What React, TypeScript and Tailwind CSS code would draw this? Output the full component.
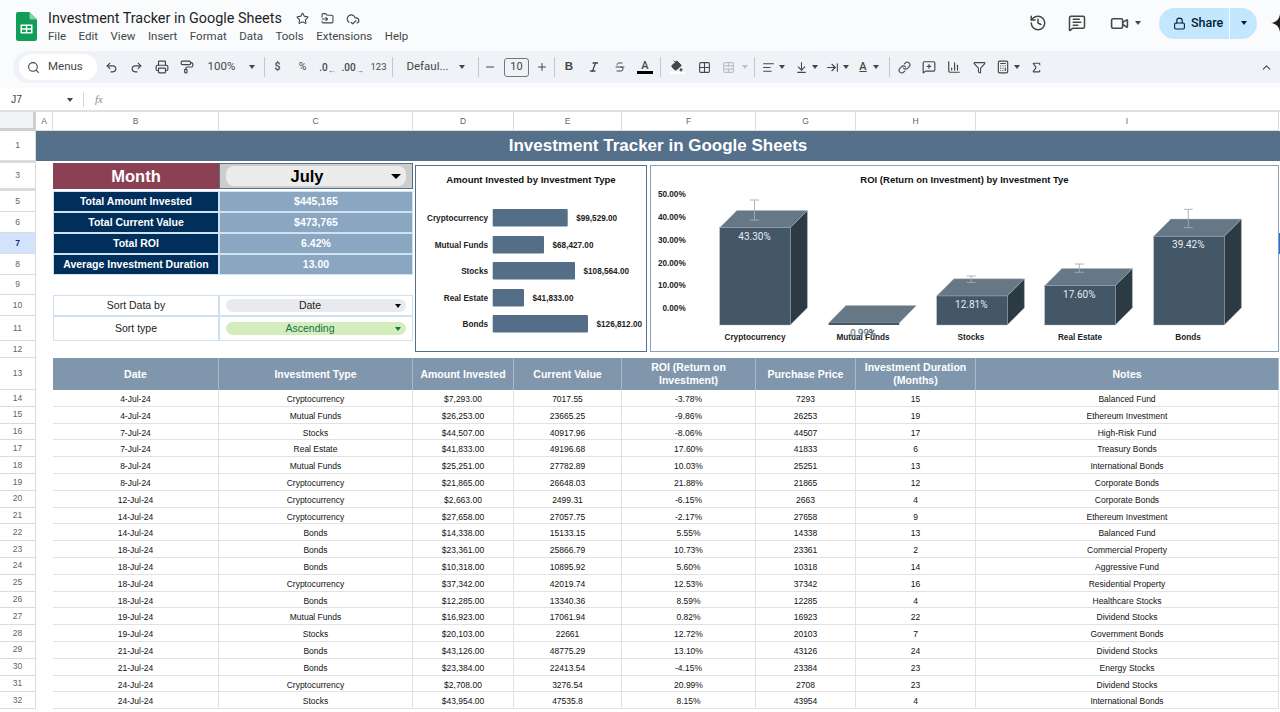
import React from "react";
import {
  Search, Undo2, Redo2, Printer, PaintRoller, Italic, Strikethrough, PaintBucket, Grid2x2, TableCellsMerge,
  AlignLeft, ArrowDownToLine, ChevronUp, Link, MessageSquarePlus, ChartColumn, Filter, Calculator, Sigma,
  History, MessageSquareText, Video, Lock, Star, FolderInput, CloudCheck, Minus, Plus, ArrowRightToLine,
} from "lucide-react";

const Caret = ({ className = "border-t-[#444746]" }: { className?: string }) => (
  <span className={`inline-block w-0 h-0 border-l-[3.5px] border-r-[3.5px] border-t-[4px] border-l-transparent border-r-transparent ${className}`} />
);

const Slot = ({ children, w = "w-[25px]" }: { children: React.ReactNode; w?: string }) => (
  <div className={`${w} h-full flex items-center justify-center shrink-0 text-[#444746]`}>{children}</div>
);
const Div = ({ className = "" }: { className?: string }) => <div className={`w-px h-[20px] bg-[#c7c7c7] shrink-0 ${className}`} />;

const rows = [
  ["4-Jul-24", "Cryptocurrency", "$7,293.00", "7017.55", "-3.78%", "7293", "15", "Balanced Fund"],
  ["4-Jul-24", "Mutual Funds", "$26,253.00", "23665.25", "-9.86%", "26253", "19", "Ethereum Investment"],
  ["7-Jul-24", "Stocks", "$44,507.00", "40917.96", "-8.06%", "44507", "17", "High-Risk Fund"],
  ["7-Jul-24", "Real Estate", "$41,833.00", "49196.68", "17.60%", "41833", "6", "Treasury Bonds"],
  ["8-Jul-24", "Mutual Funds", "$25,251.00", "27782.89", "10.03%", "25251", "13", "International Bonds"],
  ["8-Jul-24", "Cryptocurrency", "$21,865.00", "26648.03", "21.88%", "21865", "12", "Corporate Bonds"],
  ["12-Jul-24", "Cryptocurrency", "$2,663.00", "2499.31", "-6.15%", "2663", "4", "Corporate Bonds"],
  ["14-Jul-24", "Cryptocurrency", "$27,658.00", "27057.75", "-2.17%", "27658", "9", "Ethereum Investment"],
  ["14-Jul-24", "Bonds", "$14,338.00", "15133.15", "5.55%", "14338", "13", "Balanced Fund"],
  ["18-Jul-24", "Bonds", "$23,361.00", "25866.79", "10.73%", "23361", "2", "Commercial Property"],
  ["18-Jul-24", "Bonds", "$10,318.00", "10895.92", "5.60%", "10318", "14", "Aggressive Fund"],
  ["18-Jul-24", "Cryptocurrency", "$37,342.00", "42019.74", "12.53%", "37342", "16", "Residential Property"],
  ["18-Jul-24", "Bonds", "$12,285.00", "13340.36", "8.59%", "12285", "4", "Healthcare Stocks"],
  ["19-Jul-24", "Mutual Funds", "$16,923.00", "17061.94", "0.82%", "16923", "22", "Dividend Stocks"],
  ["19-Jul-24", "Stocks", "$20,103.00", "22661", "12.72%", "20103", "7", "Government Bonds"],
  ["21-Jul-24", "Bonds", "$43,126.00", "48775.29", "13.10%", "43126", "24", "Dividend Stocks"],
  ["21-Jul-24", "Bonds", "$23,384.00", "22413.54", "-4.15%", "23384", "23", "Energy Stocks"],
  ["24-Jul-24", "Cryptocurrency", "$2,708.00", "3276.54", "20.99%", "2708", "23", "Dividend Stocks"],
  ["24-Jul-24", "Stocks", "$43,954.00", "47535.8", "8.15%", "43954", "4", "International Bonds"],
];

const RowHead = ({ n, active }: { n: number | string; active?: boolean }) => (
  <div className={`flex items-center justify-center border-b border-r border-[#dcdcdc] text-[8.5px] overflow-hidden ${active ? "bg-[#d3e3fd] text-[#0b2f6b] font-bold" : "bg-white text-[#5f6368]"}`}>
    {n}
  </div>
);

const Summary = ({ label, value }: { label: string; value: string }) => (
  <>
    <div className="bg-[#002f5c] border border-[#cfe2f3] text-white font-bold text-[10.5px] flex items-center justify-center">{label}</div>
    <div className="bg-[#8aa6c0] border border-[#cfe2f3] text-white font-bold text-[10.5px] flex items-center justify-center">{value}</div>
  </>
);

const heads = ["Date", "Investment Type", "Amount Invested", "Current Value", "ROI (Return on Investment)", "Purchase Price", "Investment Duration (Months)", "Notes"];

const Box3D = ({ x, top, bottom, label, ex, e1, e2, ly }: { x: number; top: number; bottom: number; label: string; ex: number; e1: number; e2: number; ly: number }) => {
  const w = 70.5, d = 17.2;
  return (
    <g>
      <polygon points={`${x + w},${top} ${x + w + d},${top - d} ${x + w + d},${bottom - d} ${x + w},${bottom}`} fill="#2c3a44" stroke="#a9b5bf" strokeWidth="0.4" />
      <polygon points={`${x},${top} ${x + d},${top - d} ${x + w + d},${top - d} ${x + w},${top}`} fill="#667885" stroke="#a9b5bf" strokeWidth="0.4" />
      <rect x={x} y={top} width={w} height={bottom - top} fill="#435767" stroke="#a9b5bf" strokeWidth="0.4" />
      <path d={`M${ex - 4.5} ${e1}H${ex + 4.5}M${ex} ${e1}V${e2}M${ex - 4.5} ${e2}H${ex + 4.5}`} stroke="#a3adb6" strokeWidth="0.9" fill="none" />
      <text x={ex} y={ly} textAnchor="middle" dominantBaseline="middle" fontSize="10" fill="#e8edf1" fontFamily="Roboto, sans-serif">{label}</text>
    </g>
  );
};

const barData = [
  { n: "Cryptocurrency", v: "$99,529.00", y: 209, e: 567.7 },
  { n: "Mutual Funds", v: "$68,427.00", y: 236, e: 544 },
  { n: "Stocks", v: "$108,564.00", y: 262, e: 575 },
  { n: "Real Estate", v: "$41,833.00", y: 289, e: 524 },
  { n: "Bonds", v: "$126,812.00", y: 315, e: 588 },
];

export default function App() {
  return (
    <div className="w-[1280px] h-[712px] overflow-hidden bg-white relative font-['Roboto',sans-serif]">
      {/* Title bar */}
      <header className="h-[51px] bg-[#f9fbfd] flex items-start">
        <div className="w-[48px] h-full flex pl-[16px] pt-[12px] shrink-0">
          <svg width="21" height="29" viewBox="0 0 21 29">
            <path d="M2 0H13.5L21 7.5V27a2 2 0 0 1-2 2H2a2 2 0 0 1-2-2V2a2 2 0 0 1 2-2Z" fill="#0f9d58" />
            <path d="M13.5 0L21 7.5H15a1.5 1.5 0 0 1-1.5-1.5Z" fill="#87ceac" />
            <path d="M4.5 12.5H16.5V21.5H4.5ZM6 14V16.2H9.8V14ZM11.2 14V16.2H15V14ZM6 17.8V20H9.8V17.8ZM11.2 17.8V20H15V17.8Z" fill="#fff" fillRule="evenodd" />
          </svg>
        </div>
        <div className="flex flex-col pt-[9px]">
          <div className="flex items-center h-[19px]">
            <span className="text-[14.4px] text-[#1f1f1f] w-[233px] whitespace-nowrap">Investment Tracker in Google Sheets</span>
            <div className="flex items-center gap-[12px] ml-[15px] text-[#444746]">
              <Star size={13} />
              <FolderInput size={13} />
              <CloudCheck size={14} />
            </div>
          </div>
          <nav className="flex gap-[12.5px] text-[11.5px] text-[#444746] h-[16px] mt-[1px] items-center">
            {["File", "Edit", "View", "Insert", "Format", "Data", "Tools", "Extensions", "Help"].map((m) => (
              <span key={m}>{m}</span>
            ))}
          </nav>
        </div>
        <div className="ml-auto flex items-center h-[46px] text-[#444746]">
          <History size={18} className="mr-[21px]" />
          <MessageSquareText size={18} className="mr-[24px]" />
          <Video size={19} className="mr-[6px]" />
          <Caret className="border-t-[#444746] mr-[18px]" />
          <div className="w-[98px] h-[31px] rounded-full bg-[#c2e7ff] flex items-center text-[#001d35]">
            <div className="w-[71px] h-full flex items-center pl-[14px] gap-[5px] border-r border-[#f9fbfd]">
              <Lock size={13} />
              <span className="text-[12.5px] font-medium">Share</span>
            </div>
            <div className="flex-1 flex justify-center"><Caret className="border-t-[#001d35]" /></div>
          </div>
          <div className="w-[23px] flex justify-end overflow-hidden">
            <svg width="18" height="18" viewBox="0 0 18 18" className="shrink-0 -mr-[9px]"><path d="M9 0C9.6 5 13 8.4 18 9 13 9.6 9.6 13 9 18 8.4 13 5 9.6 0 9 5 8.4 8.4 5 9 0Z" fill="#1f1f1f" /></svg>
          </div>
        </div>
      </header>

      {/* Toolbar */}
      <div className="h-[37px] bg-[#f9fbfd] pl-[13px]">
        <div className="h-[32px] rounded-l-[16px] bg-[#eff3f8] flex items-center text-[#444746]">
          <div className="ml-[6px] mr-[2px] w-[78px] h-[26px] rounded-full bg-white flex items-center gap-[8px] pl-[8px] shrink-0">
            <Search size={13} />
            <span className="text-[11.5px]">Menus</span>
          </div>
          <Slot><Undo2 size={13} /></Slot>
          <Slot><Redo2 size={13} /></Slot>
          <Slot><Printer size={14} /></Slot>
          <Slot><PaintRoller size={14} /></Slot>
          <Slot w="w-[65px]"><span className="text-[11.5px] mr-[14px]">100%</span><Caret /></Slot>
          <Div />
          <Slot><span className="text-[10.5px] font-medium">$</span></Slot>
          <Slot><span className="text-[10.5px]">%</span></Slot>
          <Slot><span className="text-[10px] font-medium">.0<sub className="text-[8px]">←</sub></span></Slot>
          <Slot><span className="text-[10px] font-medium">.00<sub className="text-[8px]">→</sub></span></Slot>
          <Slot w="w-[27px]"><span className="text-[9.5px]">123</span></Slot>
          <Div />
          <Slot w="w-[85px]"><span className="text-[11.5px] mr-[10px]">Defaul...</span><Caret /></Slot>
          <Div />
          <Slot w="w-[22px]"><Minus size={12} /></Slot>
          <div className="w-[25px] h-[19px] ml-[3px] border border-[#747775] rounded-[3px] flex items-center justify-center text-[11px] shrink-0">10</div>
          <Slot><Plus size={12} /></Slot>
          <Div />
          <Slot w="w-[28px]"><span className="text-[11.5px] font-bold font-['Liberation_Sans',sans-serif]">B</span></Slot>
          <Slot w="w-[22px]"><Italic size={12} strokeWidth={2.6} /></Slot>
          <Slot w="w-[30px]"><Strikethrough size={12} /></Slot>
          <Slot w="w-[20px]">
            <div className="flex flex-col items-center">
              <span className="text-[11px] leading-[11px] font-medium">A</span>
              <span className="w-[16px] h-[2.5px] bg-black" />
            </div>
          </Slot>
          <Div className="ml-[5px]" />
          <Slot w="w-[32px]">
            <div className="flex flex-col items-center">
              <PaintBucket size={12} className="fill-[#444746]" />
              <span className="w-[16px] h-[2.5px] bg-white" />
            </div>
          </Slot>
          <Slot w="w-[22px]"><Grid2x2 size={13} /></Slot>
          <Slot w="w-[39px]"><div className="flex items-center gap-[7px] text-[#bcc0c4]"><TableCellsMerge size={13} /><Caret className="border-t-[#bcc0c4]" /></div></Slot>
          <Div />
          <Slot w="w-[36px]"><div className="flex items-center gap-[4px]"><AlignLeft size={13} /><Caret /></div></Slot>
          <Slot w="w-[30px]"><div className="flex items-center gap-[4px]"><ArrowDownToLine size={13} /><Caret /></div></Slot>
          <Slot w="w-[32px]"><div className="flex items-center gap-[4px]"><ArrowRightToLine size={13} /><Caret /></div></Slot>
          <Slot w="w-[32px]">
            <div className="flex items-center gap-[6px]">
              <span className="text-[11px] underline font-medium">A</span><Caret />
            </div>
          </Slot>
          <Div className="ml-[4px]" />
          <Slot w="w-[28px]"><Link size={13} /></Slot>
          <Slot w="w-[22px]"><MessageSquarePlus size={14} /></Slot>
          <Slot w="w-[28px]"><ChartColumn size={14} /></Slot>
          <Slot w="w-[22px]"><Filter size={13} /></Slot>
          <Slot w="w-[35px]"><div className="flex items-center gap-[4px]"><Calculator size={14} /><Caret /></div></Slot>
          <Slot w="w-[22px]"><Sigma size={13} /></Slot>
          <div className="ml-auto mr-[7px]"><ChevronUp size={13} /></div>
        </div>
      </div>

      {/* Formula bar */}
      <div className="h-[24px] pt-[1px] bg-white border-b-2 border-[#e0e0e0] flex items-center text-[#444746] font-['Liberation_Sans',sans-serif]">
        <span className="w-[67px] pl-[11px] text-[10.5px]">J7</span>
        <Caret />
        <div className="w-px h-[15px] bg-[#d5d5d5] ml-[10px]" />
        <span className="ml-[11px] text-[11px] italic font-['Liberation_Serif',serif] text-[#8a8d90]">fx</span>
      </div>

      {/* Sheet */}
      <div className="relative font-['Liberation_Sans',sans-serif]">
        <div className="grid grid-cols-[36px_17px_166px_194px_101px_108px_134px_100px_120px_303px_1px] grid-rows-[19px_30px_2px_26px_2px_21px_21px_21px_21px_20px_21px_25px_17px_32px] auto-rows-[16.8px]">
          {/* Column letters */}
          <div className="bg-[#f1f3f4] border-r-[3px] border-b-[3px] border-[#d0d0d0]" />
          {["A", "B", "C", "D", "E", "F", "G", "H", "I"].map((c) => (
            <div key={c} className="border-r border-b border-[#dcdcdc] flex items-center justify-center text-[8.5px] text-[#5f6368]">{c}</div>
          ))}
          <div />

          {/* Row 1 */}
          <RowHead n={1} />
          <div className="col-span-10 bg-[#54708a] text-white font-bold text-[17px] flex items-center justify-center">Investment Tracker in Google Sheets</div>

          {/* Row 2 */}
          <div className="border-b-2 border-r border-[#dcdcdc]" />
          <div className="col-span-10" />

          {/* Row 3 */}
          <RowHead n={3} />
          <div />
          <div className="bg-[#8b4153] text-white font-bold text-[16.5px] flex items-center justify-center">Month</div>
          <div className="bg-[#cdcdcd] border border-[#54708a] px-[6px] py-[2px]">
            <div className="relative h-full bg-[#ececec] rounded-[8px] flex items-center justify-center font-bold text-[16.5px] text-black">
              <span className="mr-[18px]">July</span>
              <span className="absolute right-[5px] top-[8px] w-0 h-0 border-l-[5px] border-r-[5px] border-t-[5px] border-l-transparent border-r-transparent border-t-black" />
            </div>
          </div>
          <div className="col-span-7" />

          {/* Row 4 */}
          <div className="border-b-2 border-r border-[#dcdcdc]" />
          <div className="col-span-10" />

          {/* Rows 5–8 */}
          <RowHead n={5} /><div /><Summary label="Total Amount Invested" value="$445,165" /><div className="col-span-7" />
          <RowHead n={6} /><div /><Summary label="Total Current Value" value="$473,765" /><div className="col-span-7" />
          <RowHead n={7} active /><div /><Summary label="Total ROI" value="6.42%" /><div className="col-span-6" /><div className="bg-[#1a73e8]" />
          <RowHead n={8} /><div /><Summary label="Average Investment Duration" value="13.00" /><div className="col-span-7" />

          {/* Row 9 */}
          <RowHead n={9} /><div className="col-span-10" />

          {/* Row 10 */}
          <RowHead n={10} /><div />
          <div className="border border-[#cfe2f3] flex items-center justify-center text-[10.5px] text-[#222]">Sort Data by</div>
          <div className="border border-[#cfe2f3] px-[6px] py-[3px]">
            <div className="relative h-full rounded-full bg-[#e9eaed] flex items-center justify-center text-[10.5px] text-[#222] pr-[12px]">
              Date
              <span className="absolute right-[5px] top-0 h-full flex items-center"><Caret className="border-t-black" /></span>
            </div>
          </div>
          <div className="col-span-7" />

          {/* Row 11 */}
          <RowHead n={11} /><div />
          <div className="border border-[#cfe2f3] flex items-center justify-center text-[10.5px] text-[#222]">Sort type</div>
          <div className="border border-[#cfe2f3] px-[6px] py-[5px]">
            <div className="relative h-full rounded-full bg-[#d4edbc] flex items-center justify-center text-[10.5px] text-[#11734b] pr-[12px]">
              Ascending
              <span className="absolute right-[5px] top-0 h-full flex items-center"><Caret className="border-t-[#11734b]" /></span>
            </div>
          </div>
          <div className="col-span-7" />

          {/* Row 12 */}
          <RowHead n={12} /><div className="col-span-10" />

          {/* Row 13 */}
          <RowHead n={13} /><div />
          {heads.map((h) => (
            <div key={h} className="bg-[#7f96ac] border-r border-[#a9b9c8] text-white font-bold text-[10.5px] leading-[13px] flex items-center justify-center text-center px-[3px]">{h}</div>
          ))}
          <div />

          {/* Data */}
          {rows.map((r, i) => (
            <React.Fragment key={i}>
              <RowHead n={14 + i} /><div />
              {r.map((c, j) => (
                <div key={j} className="border-b border-r border-[#e2e2e2] pt-[3px] flex items-center justify-center text-[8.5px] text-[#111] whitespace-nowrap">{c}</div>
              ))}
              <div />
            </React.Fragment>
          ))}
        </div>

        {/* Bar chart overlay (sheet origin y = 112) */}
        <svg className="absolute left-[415px] top-[53px] bg-white border border-[#54708a]" width="232" height="187" viewBox="416 166 230 185" fontFamily="'Liberation Sans', sans-serif">
          <text x="531" y="180.3" textAnchor="middle" dominantBaseline="middle" fontSize="9.6" fontWeight="700" fill="#111">Amount Invested by Investment Type</text>
          {barData.map((b) => (
            <g key={b.n}>
              <text x="488" y={b.y + 10} textAnchor="end" dominantBaseline="middle" fontSize="8.2" fontWeight="700" fill="#222">{b.n}</text>
              <rect x="492.7" y={b.y} width={b.e - 492.7} height="17.4" rx="1" fill="#546e87" />
              <text x={b.e + 8.5} y={b.y + 10} dominantBaseline="middle" fontSize="8.2" fontWeight="700" fill="#222">{b.v}</text>
            </g>
          ))}
        </svg>

        {/* ROI chart overlay */}
        <svg className="absolute left-[650px] top-[53px] bg-white border border-[#8aa0b4]" width="629" height="187" viewBox="651 166 627 185" fontFamily="'Liberation Sans', sans-serif">
          <text x="964.5" y="180.3" textAnchor="middle" dominantBaseline="middle" fontSize="9.5" fontWeight="700" fill="#111">ROI (Return on Investment) by Investment Tye</text>
          {[["50.00%", 194.8], ["40.00%", 218], ["30.00%", 240.5], ["20.00%", 263.8], ["10.00%", 286], ["0.00%", 308.5]].map(([t, y]) => (
            <text key={t} x="685.7" y={y} textAnchor="end" dominantBaseline="middle" fontSize="8.2" fontWeight="700" fill="#222">{t}</text>
          ))}
          <Box3D x={719.7} top={227.7} bottom={325} label="43.30%" ex={754.5} e1={200} e2={220} ly={237} />
          <polygon points="828.7,323 845.9,305.5 916.4,305.5 899.2,323" fill="#667885" stroke="#a9b5bf" strokeWidth="0.4" />
          <rect x="828.7" y="323" width="70.5" height="2" fill="#435767" />
          <Box3D x={936.7} top={296} bottom={325} label="12.81%" ex={971.3} e1={276} e2={282.3} ly={305.5} />
          <Box3D x={1044.7} top={285.7} bottom={325} label="17.60%" ex={1079.3} e1={264} e2={272.3} ly={295} />
          <Box3D x={1153.7} top={236.3} bottom={325} label="39.42%" ex={1188.3} e1={209.3} e2={227.7} ly={245.5} />
          {[["Cryptocurrency", 755], ["Mutual Funds", 863], ["Stocks", 971], ["Real Estate", 1080], ["Bonds", 1188]].map(([t, x]) => (
            <text key={t} x={x} y="338" textAnchor="middle" dominantBaseline="middle" fontSize="8.2" fontWeight="700" fill="#222">{t}</text>
          ))}
          <text x="863" y="333" textAnchor="middle" dominantBaseline="middle" fontSize="9.5" fill="#c8d2da" stroke="#435767" strokeWidth="0.4" fontFamily="Roboto, sans-serif">0.99%</text>
        </svg>
      </div>
    </div>
  );
}
